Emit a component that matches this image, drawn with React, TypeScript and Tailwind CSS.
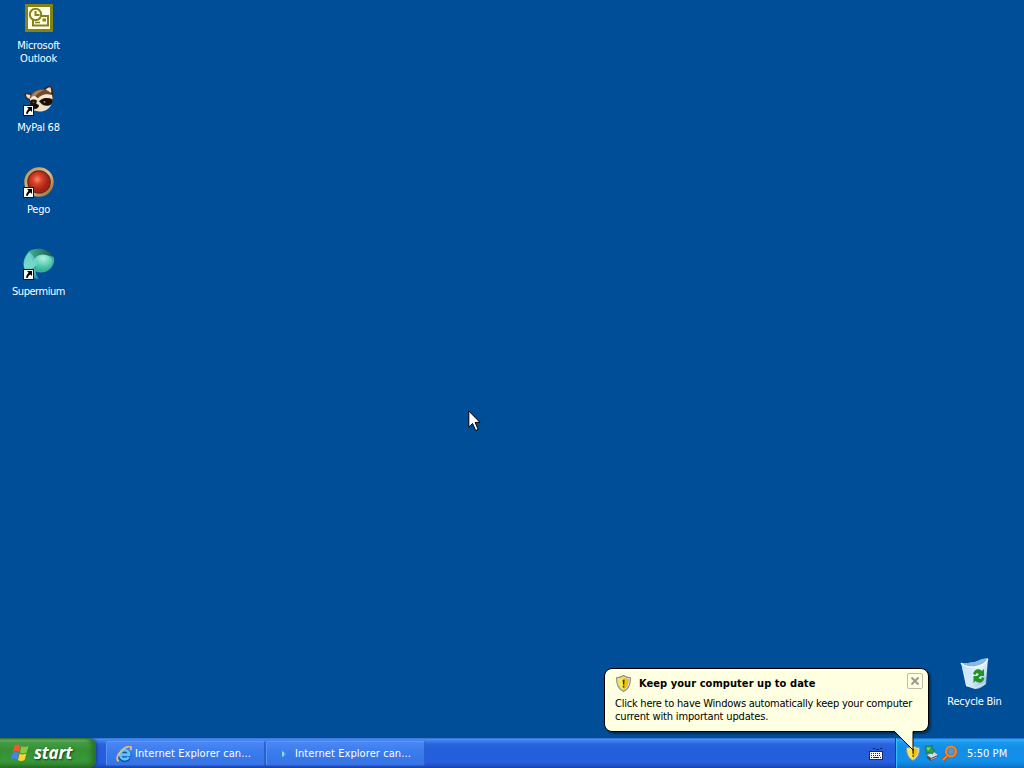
import type { ReactNode } from "react";

function ShortcutArrow() {
  return (
    <svg
      className="absolute bottom-0 left-0"
      width="11"
      height="11"
      viewBox="0 0 11 11"
    >
      <rect x="0.5" y="0.5" width="10" height="10" fill="#fff" stroke="#111" />
      <path d="M4 2h5v5L7.500 5.500C6 6.200 5 7.400 4.600 9H3.200C3.100 6.800 4 5.200 5.600 3.700z" fill="#000" />
    </svg>
  );
}

function OutlookIcon() {
  return (
    <svg width="32" height="32" viewBox="0 0 32 32">
      <rect x="2" y="2" width="28" height="28" fill="#858313" />
      <rect x="5" y="5" width="22" height="22" fill="#fffde8" />
      <g fill="none" stroke="#85821c" strokeWidth="2">
        <circle cx="12.500" cy="12.500" r="5.700" />
        <path d="M12.500 9v4h4" />
        <path d="M10 18v5.500h15v-9.500h-6" />
        <path d="M12 20.500h5" strokeWidth="1.500" />
      </g>
      <rect x="19.500" y="16.500" width="3.500" height="3" fill="#85821c" />
    </svg>
  );
}

function RaccoonIcon() {
  return (
    <svg width="32" height="32" viewBox="0 0 32 32">
      <path d="M7 17C3 16 1 12 1.500 9.500 4 8 8 9 10 11z" fill="#3b2a20" />
      <path d="M6.500 15C4 14 2.800 12 3 10.500 5 10 7 11 8 12z" fill="#f1dcc0" />
      <path d="M20 6c2-3 5-4.500 8-4 2.500 3 3 7 1.500 11z" fill="#382820" />
      <path d="M22.500 6c1.500-1.800 3-2.700 4.700-2.700C28.300 5.500 28.500 7 28 9z" fill="#f3dfc5" />
      <path d="M7 13C9 7 16 4 22 5.500c6 2 8.500 6 7.500 12C28 23 23 26.500 17 27c-6 0-10-4-10-14z" fill="#6d4c32" />
      <path d="M8 13c2-5 7-7.500 13-7-4 2-8 4-9.500 8z" fill="#a8835d" />
      <path d="M7 15c1-2 3-3.500 5-3l3 2.500c2-3 8-5.500 14-3.500l.5 4c-5-2-11-1-14 2.500-3-1.500-6-1.500-8.500 0z" fill="#f7e7d0" />
      <path d="M7 17c2-2 6-2 8 .5L13 23l-5 1z" fill="#1b1310" />
      <path d="M16 18c3-5 10-5 13.500-2-.2 4-3 6.500-6 7-3-2-5-3-7.500-5z" fill="#17110e" />
      <path d="M14 16c2 1 3.500 3 5 4.500 3 1.500 6 2 9.500 0C26 25.500 21 28 16 27.500l-5-1 2-5z" fill="#f1dec6" />
      <path d="M10 21c2-1.500 5-1 6 .5-.5 2.200-2 3.500-4 3.500-1.500-.8-2.500-2.300-2-4z" fill="#130e0c" />
      <circle cx="21.500" cy="18" r="1" fill="#a86f43" />
      <circle cx="10.500" cy="18.200" r=".8" fill="#9c6c45" />
    </svg>
  );
}

function PegoIcon() {
  return (
    <svg width="32" height="32" viewBox="0 0 32 32">
      <defs>
        <radialGradient id="pego-gem" cx="42%" cy="38%">
          <stop offset="0" stopColor="#f58a70" />
          <stop offset=".45" stopColor="#d94028" />
          <stop offset="1" stopColor="#a32414" />
        </radialGradient>
        <linearGradient id="pego-ring" x2="1" y2="1">
          <stop offset="0" stopColor="#b78b4c" />
          <stop offset=".5" stopColor="#e2c08a" />
          <stop offset="1" stopColor="#8b5a2c" />
        </linearGradient>
      </defs>
      <circle cx="16" cy="16" r="14.700" fill="url(#pego-ring)" />
      <circle cx="16" cy="16" r="11.800" fill="#65281a" />
      <circle cx="16" cy="16" r="10.600" fill="url(#pego-gem)" />
    </svg>
  );
}

function SupermiumIcon() {
  return (
    <svg width="32" height="32" viewBox="0 0 32 32">
      <defs>
        <linearGradient id="sm-left" x2="0" y2="1">
          <stop offset="0" stopColor="#35a993" />
          <stop offset=".5" stopColor="#7de0d5" />
          <stop offset="1" stopColor="#238cae" />
        </linearGradient>
        <linearGradient id="sm-top" x2="1">
          <stop offset="0" stopColor="#43b399" />
          <stop offset="1" stopColor="#19524a" />
        </linearGradient>
        <radialGradient id="sm-ball" cx="50%" cy="25%" r="65%">
          <stop offset="0" stopColor="#b0f3df" />
          <stop offset="1" stopColor="#43bea7" />
        </radialGradient>
      </defs>
      <path d="M6 4C0 9-1 18 3 24c3 4 8 7 13 7-3-3-4-7-3-12z" fill="url(#sm-left)" />
      <path d="M5 4C13-2 28 0 31 12l-1 4c-4-5-11-7-18-5z" fill="url(#sm-top)" />
      <path d="M9 21c7 6 17 4 21-4 1.500-3 1.500-6 .5-8-3-2-6-2-9 0z" fill="#3cb099" />
      <ellipse cx="20" cy="14" rx="9.500" ry="7.500" fill="url(#sm-ball)" />
      <path d="M6 4c4 3 7 7 8 13l-9 5C1 16 1 9 6 4z" fill="#72d7cb" opacity=".85" />
    </svg>
  );
}

function RecycleBinIcon() {
  return (
    <svg width="32" height="32" viewBox="0 0 32 32">
      <defs>
        <linearGradient id="bin" x2="1" y2="1">
          <stop offset="0" stopColor="#a9cfee" />
          <stop offset=".5" stopColor="#e4f3fc" />
          <stop offset="1" stopColor="#8ab6df" />
        </linearGradient>
      </defs>
      <path d="M2 5c5 0 9 0 14-1 5-2 9-4 13-3.500L27 26c-3 3-8 5-11 5l-9-3z" fill="url(#bin)" />
      <path d="M2 5c5 0 9 0 14-1 5-2 9-4 13-3.500-2 4-7 7-13 8C10 9 5 8 2 5z" fill="#86b8e2" />
      <path d="M2 5c3 3.500 8 4.500 14 4 6-1 11-4.500 13-8" fill="none" stroke="#f4fbff" strokeWidth="1.400" />
      <path d="M3 9l5 18 7 2-2-18c-4 0-7-.5-10-2z" fill="#cde7fa" opacity=".8" />
      <path d="M7 27.500l9 2.500 10-4.500" fill="none" stroke="#d8eefb" />
      <g fill="#239322">
        <path d="M14 16c1-5 6-6 9-3l2-2v7h-7l2-2c-2-1-3-1-3.500 1z" />
        <path d="M25.500 20c-1 5-6 6-9 3l-2 2v-7h7l-2 2c2 2 3 1 3.500-1z" />
      </g>
    </svg>
  );
}

function Shield({ size }: { size: number }) {
  return (
    <svg width={size} height={size} viewBox="0 0 16 16">
      <path d="M8 .5c2 1.500 4 2 6.500 2 .3 6-1.500 10.500-6.500 13C3 13 1.200 8.500 1.500 2.500 4 2.500 6 2 8 .5z" fill="#dadde0" stroke="#8e8c80" />
      <path d="M8 2.200c1.600 1 3.200 1.500 5 1.600 0 4.700-1.300 8-5 10.200C4.300 11.800 3 8.500 3 3.800c1.800-.1 3.400-.6 5-1.600z" fill="#e9c50d" />
      <path d="M8 2.200v11.800C4.300 11.800 3 8.500 3 3.800c1.800-.1 3.400-.6 5-1.600z" fill="#f9ea48" />
      <path d="M7.200 4.500h1.800l-.3 4.700H7.500zM7.300 10.200h1.500v1.500H7.300z" fill="#49300c" />
    </svg>
  );
}

function WindowsFlag() {
  return (
    <svg width="20" height="20" viewBox="0 0 20 20">
      <path d="M4.500 2.500c2-1.500 4-1.500 6.300 0L9.200 9C7 7.700 5 7.700 2.800 9z" fill="#f05a28" />
      <path d="M11.500 3c2 1.300 4 1.200 7 0l-1.900 6.500c-2.500 1.200-4.600 1.200-6.700 0z" fill="#88c943" />
      <path d="M2.500 10c2-1.300 4-1.300 6.400 0l-1.700 6.500c-2.200-1.300-4.200-1.300-6.300 0z" fill="#4a82ed" />
      <path d="M9.700 10.500c2 1.300 4 1.200 6.700 0l-1.800 6.500c-2.500 1.300-4.500 1.200-6.600 0z" fill="#ffd238" />
    </svg>
  );
}

function ExplorerIcon() {
  return (
    <svg width="16" height="16" viewBox="0 0 16 16">
      <path d="M13 11.200A4.600 4.600 0 1 1 13.300 8.600H5" fill="none" stroke="#0d4fa8" strokeWidth="4" />
      <path d="M12.700 11A4.600 4.600 0 1 1 13.300 8.600H5" fill="none" stroke="#5cc3fb" strokeWidth="2.600" />
      <path d="M2.800 15.300C-.8 14 1.800 7.500 6.200 3.800 9.500 1 14-.3 15 1.200c.5.900.1 1.900-.6 3.100" fill="none" stroke="#e8c27a" strokeWidth="1.700" />
    </svg>
  );
}

function PlayerIcon() {
  return (
    <svg width="16" height="16" viewBox="0 0 16 16">
      <path d="M6 5l4.500 3L6 11z" fill="#50a9ea" />
      <path d="M6 5l2 1.300v3.400L6 11z" fill="#8bdde8" />
    </svg>
  );
}

function KeyboardIcon() {
  return (
    <svg width="14" height="13" viewBox="0 0 14 13">
      <path d="M4 1.500h2m1 1h3m1-1h2" stroke="#111d52" />
      <rect x=".5" y="4.500" width="13" height="8" fill="#f8faff" stroke="#152b70" />
      <path d="M2 6.500h10M2 8.500h10" stroke="#17235b" strokeDasharray="1 1" />
      <path d="M2 10.500h1m1 0h6m1 0h1" stroke="#17235b" />
    </svg>
  );
}

function SafelyRemoveIcon() {
  return (
    <svg width="16" height="16" viewBox="0 0 16 16">
      <path d="M4 10l7-3 4 3-1 3-7 3-3-3z" fill="#435161" />
      <path d="M4 10l7-3 4 3-7 3z" fill="#d4dde1" />
      <path d="M8 14.500l6-2.500" stroke="#aabac3" />
      <path d="M2 1.500l7.500-1-1 3 3 1.500-2 4L6 7 3.500 9z" fill="#2fa243" stroke="#176c32" strokeWidth=".6" />
      <path d="M3.500 2.500h4.500l-3 3.500z" fill="#7bd37b" />
    </svg>
  );
}

function SearchIcon() {
  return (
    <svg width="17" height="17" viewBox="0 0 17 17">
      <path d="M6.500 10.500L2 15" stroke="#a84b14" strokeWidth="3.600" />
      <path d="M6.500 10.500L2 15" stroke="#ef8a37" strokeWidth="2.200" />
      <circle cx="10" cy="6.500" r="4.900" fill="#3b9be4" stroke="#b3561b" strokeWidth="3" />
      <circle cx="10" cy="6.500" r="4.900" fill="none" stroke="#ef8a32" strokeWidth="2" />
      <circle cx="10" cy="6.500" r="1" fill="#de782b" />
    </svg>
  );
}

function DesktopIcon({
  place,
  shortcut,
  icon,
  children,
}: {
  place: string;
  shortcut?: boolean;
  icon: ReactNode;
  children: ReactNode;
}) {
  return (
    <div className={`absolute flex w-[77px] flex-col items-center gap-[5px] ${place}`}>
      <div className="relative h-8 w-8">
        {icon}
        {shortcut && <ShortcutArrow />}
      </div>
      <div className="text-center leading-[13px] whitespace-nowrap text-white">{children}</div>
    </div>
  );
}

function TaskButton({ icon, title }: { icon: ReactNode; title: string }) {
  return (
    <button className="flex h-[25px] w-[159px] items-center gap-[3px] rounded-[2px] border border-[#2b60d2] border-t-[#6298f6] border-l-[#5c93f3] bg-linear-to-b from-[#4a87f3] via-[#397aec] to-[#3773e5] pl-[9px] text-white">
      {icon}
      <span className="pt-px tracking-[0.08px] whitespace-nowrap">{title}</span>
    </button>
  );
}

function Balloon() {
  return (
    <div className="absolute top-[668px] left-[604px] h-[64px] w-[325px] rounded-[8px] border border-black bg-[#ffffe1] pt-[5px] pl-[10px] text-black shadow-[2px_2px_2px_rgba(0,0,0,0.4)]">
      <div className="flex h-[18px] items-center gap-[7px]">
        <Shield size={17} />
        <span className="pt-[2px] text-[11px] font-bold tracking-[0.06px] whitespace-nowrap">
          Keep your computer up to date
        </span>
      </div>
      <p className="mt-[5px] leading-[13px] tracking-[-0.23px] whitespace-nowrap">
        Click here to have Windows automatically keep your computer
        <br />
        <span className="tracking-[-0.16px]">current with important updates.</span>
      </p>
      <button className="absolute top-[4px] right-[5px] flex h-4 w-4 items-center justify-center rounded-[2px] border border-[#bdbda9]">
        <svg width="8" height="8" viewBox="0 0 8 8">
          <path d="M.5.5l7 7M7.500.5l-7 7" stroke="#9a9a8b" strokeWidth="2" />
        </svg>
      </button>
      <svg className="absolute top-[61px] left-[288px]" width="24" height="22" viewBox="0 0 24 22">
        <path d="M2 0v1.500L20 20V0z" fill="#ffffe1" />
        <path d="M1.500 1.500L20 20V1.500" fill="none" stroke="#000" />
      </svg>
    </div>
  );
}

function Taskbar() {
  return (
    <div className="flex h-[30px] bg-[linear-gradient(to_bottom,#3166c9_0px,#4a8cf3_1px,#3e80ed_3px,#2865df_6px,#245edb_12px,#265fdf_24px,#1d4fc0_28px,#1941a5_30px)]">
      <button className="flex h-[30px] w-[96px] items-center gap-[4px] rounded-r-[8px] bg-[linear-gradient(to_bottom,#317431_0px,#69b468_2px,#429b42_5px,#359035_12px,#389838_23px,#2f862f_27px,#246724_30px)] pl-[10px] shadow-[inset_-4px_0_5px_#277028,1px_0_3px_#173c8c]">
        <WindowsFlag />
        <span className="pb-px font-['Open_Sans',sans-serif] text-[17px] leading-none font-bold tracking-[-0.2px] text-white italic [text-shadow:1px_1px_2px_#143d14]">
          start
        </span>
      </button>
      <div className="flex flex-1 items-center gap-[1px] pt-[1px] pl-[10px]">
        <TaskButton icon={<ExplorerIcon />} title="Internet Explorer can..." />
        <TaskButton icon={<PlayerIcon />} title="Internet Explorer can..." />
      </div>
      <div className="flex w-[26px] items-center pt-[1px]">
        <KeyboardIcon />
      </div>
      <div className="flex w-[129px] items-center border-l border-[#103f91] bg-[linear-gradient(to_bottom,#145fc5_0px,#3aaef5_2px,#189af0_4px,#128de8_10px,#1290e9_23px,#107bd2_28px,#1160b3_30px)] pl-[9px] shadow-[inset_1px_0_1px_#3bc0ff]">
        <Shield size={16} />
        <span className="ml-[2px]">
          <SafelyRemoveIcon />
        </span>
        <span className="ml-[2px]">
          <SearchIcon />
        </span>
        <span className="ml-[9px] pt-[2px] tracking-[0.05px] whitespace-nowrap text-white">5:50 PM</span>
      </div>
    </div>
  );
}

export default function App() {
  return (
    <div className="relative flex h-[768px] w-[1024px] flex-col overflow-hidden bg-[#004e98] font-['DejaVu_Sans_Condensed','DejaVu_Sans',sans-serif] text-[11px] tracking-[-0.25px]">
      <main className="relative flex-1">
        <DesktopIcon place="top-[2px] left-0" icon={<OutlookIcon />}>
          Microsoft
          <br />
          Outlook
        </DesktopIcon>
        <DesktopIcon place="top-[84px] left-0" shortcut icon={<RaccoonIcon />}>
          MyPal 68
        </DesktopIcon>
        <DesktopIcon place="top-[166px] left-0" shortcut icon={<PegoIcon />}>
          Pego
        </DesktopIcon>
        <DesktopIcon place="top-[248px] left-0" shortcut icon={<SupermiumIcon />}>
          <span className="tracking-[-0.45px]">Supermium</span>
        </DesktopIcon>
        <DesktopIcon place="top-[658px] left-[936px]" icon={<RecycleBinIcon />}>
          Recycle Bin
        </DesktopIcon>
        <svg className="absolute top-[410px] left-[468px]" width="13" height="22" viewBox="0 0 13 22">
          <path d="M.8 1v16l3.700-3.500 3.200 7 2.500-1.100-3.100-7H12z" fill="#fff" stroke="#000" />
        </svg>
      </main>
      <Taskbar />
      <Balloon />
    </div>
  );
}
